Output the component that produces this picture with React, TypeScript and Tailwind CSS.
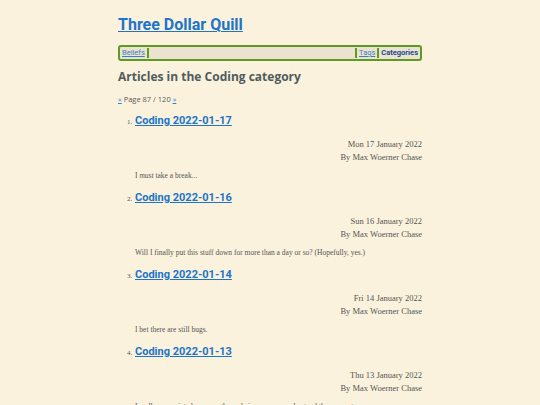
import React from "react";

const posts = [
  { n: 1, title: "Coding 2022-01-17", date: "Mon 17 January 2022", excerpt: <>I <em>must</em> take a break...</> },
  { n: 2, title: "Coding 2022-01-16", date: "Sun 16 January 2022", excerpt: <>Will I finally put this stuff down for more than a day or so? (Hopefully, yes.)</> },
  { n: 3, title: "Coding 2022-01-14", date: "Fri 14 January 2022", excerpt: <>I bet there are still bugs.</> },
  { n: 4, title: "Coding 2022-01-13", date: "Thu 13 January 2022", excerpt: <>I really appreciate how easy the code is once you understand the concepts...</> },
];

const sans = { fontFamily: '"Open Sans", "Noto Sans", sans-serif' };
const roboto = { fontFamily: 'Roboto, "Open Sans", sans-serif' };
const serif = { fontFamily: '"Liberation Serif", "DejaVu Serif", serif' };

export default function App() {
  return (
    <div className="w-full bg-[#faf2dc] overflow-hidden h-[405px]">
      <div className="mx-auto w-[304px] pt-[14px]">
        <h1 style={roboto} className="text-[16px] leading-[22px] font-bold">
          <a href="#" className="text-[#1d74c8] underline">Three Dollar Quill</a>
        </h1>
        <nav style={roboto} className="mt-[9px] h-[16px] border-2 border-[#5e9b22] rounded-[3px] bg-[#ebe3cf] flex items-center px-[2px] text-[7.5px] leading-[10px]">
          <a href="#" className="text-[#3a7fc4] underline">Beliefs</a>
          <span className="w-[2px] h-[10px] bg-[#5e9b22] ml-[2px]" />
          <span className="flex-1" />
          <span className="w-[2px] h-[10px] bg-[#5e9b22] mr-[2px]" />
          <a href="#" className="text-[#3a7fc4] underline">Tags</a>
          <span className="w-[2px] h-[10px] bg-[#5e9b22] mx-[2px]" />
          <span className="text-[#1c4a8c] font-bold">Categories</span>
        </nav>
        <h2 style={sans} className="mt-[8px] text-[12px] leading-[16px] font-bold text-[#4f5c5e]">Articles in the Coding category</h2>
        <p style={sans} className="mt-[9px] text-[7.5px] leading-[10px] text-[#5a5a5a]">
          <a href="#" className="text-[#3a7fc4] underline">«</a> Page 87 / 120 <a href="#" className="text-[#3a7fc4] underline">»</a>
        </p>
        <ol className="mt-[8px] pl-[17px]">
          {posts.map((p) => (
            <li key={p.n} className="h-[77px]">
              <div className="flex items-baseline">
                <span style={serif} className="text-[7px] text-[#555] w-[0px] -ml-[8px] mr-[8px]">{p.n}.</span>
                <a href="#" style={roboto} className="text-[11px] leading-[18px] font-bold text-[#1d74c8] underline">{p.title}</a>
              </div>
              <div style={serif} className="mt-[8px] text-right text-[8.5px] leading-[12.5px] text-[#555]">
                <div>{p.date}</div>
                <div>By Max Woerner Chase</div>
              </div>
              <p style={serif} className="mt-[8px] text-[7.5px] leading-[10px] text-[#555] whitespace-nowrap">{p.excerpt}</p>
            </li>
          ))}
        </ol>
      </div>
    </div>
  );
}
